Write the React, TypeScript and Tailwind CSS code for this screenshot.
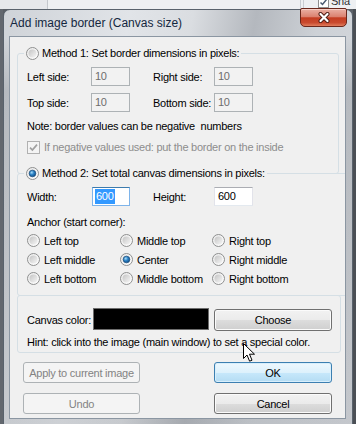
import type { ReactNode } from "react";

// Win7-style "Add image border (Canvas size)" dialog

function Defs() {
  return (
    <svg width="0" height="0" className="block">
      <defs>
        <linearGradient id="rbOuter" x1="0" y1="0" x2="1" y2="1">
          <stop offset="0" stopColor="#e9e9e9" />
          <stop offset="1" stopColor="#ffffff" />
        </linearGradient>
        <linearGradient id="rbInner" x1="0" y1="0" x2="1" y2="1">
          <stop offset="0" stopColor="#c4c4c4" />
          <stop offset="1" stopColor="#f6f6f6" />
        </linearGradient>
        <radialGradient id="rbDot" cx="0.38" cy="0.35" r="0.7">
          <stop offset="0" stopColor="#a9dcf8" />
          <stop offset="0.45" stopColor="#2f86c9" />
          <stop offset="1" stopColor="#0e4a83" />
        </radialGradient>
      </defs>
    </svg>
  );
}

function Radio({ checked = false }: { checked?: boolean }) {
  return (
    <svg width="13" height="13" viewBox="0 0 13 13" className="shrink-0">
      <circle cx="6.5" cy="6.5" r="6" fill="url(#rbOuter)" stroke="#8e8f8f" />
      <circle cx="6.5" cy="6.5" r="4" fill="url(#rbInner)" />
      {checked && (
        <circle cx="6.5" cy="6.5" r="3.3" fill="url(#rbDot)" stroke="#1a4f80" strokeWidth="0.7" />
      )}
    </svg>
  );
}

function CheckBoxDisabled() {
  return (
    <svg width="13" height="13" viewBox="0 0 13 13" className="shrink-0">
      <rect x="0.5" y="0.5" width="12" height="12" fill="#f4f4f4" stroke="#b1b1b1" />
      <path d="M3 6.6 L5.4 9 L10 3.6" fill="none" stroke="#a0a0a0" strokeWidth="1.7" />
    </svg>
  );
}

function TextBox({
  value,
  w,
  state = "normal",
}: {
  value: string;
  w: string;
  state?: "normal" | "disabled" | "focused";
}) {
  if (state === "disabled") {
    return (
      <div className={`${w} h-[19px] shrink-0 border border-[#adb2b5] bg-[#f2f2f2] pl-[3px] leading-[17px] text-[#6d6d6d]`}>
        {value}
      </div>
    );
  }
  if (state === "focused") {
    return (
      <div className={`${w} h-[19px] shrink-0 border border-[#7eb4ea] border-t-[#3d7bad] bg-white pl-[2px] pt-[1px]`}>
        <span className="inline-block h-[15px] bg-[#3399ff] px-px leading-[15px] text-white">{value}</span>
      </div>
    );
  }
  return (
    <div className={`${w} h-[19px] shrink-0 border border-[#e2e3ea] border-t-[#abadb3] border-b-[#e3e9ef] bg-white pl-[3px] leading-[17px]`}>
      {value}
    </div>
  );
}

function Button({
  children,
  w,
  variant = "normal",
  h = "h-[21px]",
}: {
  children: ReactNode;
  w: string;
  variant?: "normal" | "default" | "disabled";
  h?: string;
}) {
  const look =
    variant === "disabled"
      ? "border-[#adb2b5] bg-[#f4f4f4] text-[#838383]"
      : variant === "default"
        ? "border-[#3c7fb1] bg-[linear-gradient(180deg,#eef8fe_0%,#ddf1fc_50%,#c7e8fb_51%,#b4dcf3_100%)] shadow-[inset_0_0_0_1px_#d8effc]"
        : "border-[#707070] bg-[linear-gradient(180deg,#f2f2f2_0%,#ebebeb_50%,#dddddd_51%,#cfcfcf_100%)] shadow-[inset_0_0_0_1px_#fbfbfb]";
  return (
    <div className={`${w} ${h} shrink-0 flex items-center justify-center rounded-[3px] border ${look}`}>
      {children}
    </div>
  );
}

function Backdrop() {
  return (
    <div className="flex h-[9px] overflow-hidden bg-[#eef0f2]">
      <div className="w-[47px] bg-[#e6e8eb]" />
      <div className="w-px bg-[#c3c7cc]" />
      <div className="w-[252px]" />
      <div className="w-px bg-[#c9cdd2]" />
      <div className="w-[2px]" />
      <div className="w-px bg-[#c9cdd2]" />
      <div className="w-[14px]" />
      <svg width="11" height="11" viewBox="0 0 11 11" className="-mt-[3px] shrink-0">
        <rect x="0.5" y="0.5" width="10" height="10" fill="#ffffff" stroke="#8f8f8f" />
        <path d="M2.5 5.5 L4.5 7.5 L8.5 2.5" fill="none" stroke="#4a5a70" strokeWidth="1.5" />
      </svg>
      <span className="ml-[2px] -mt-[6px] text-[11px] leading-[14px] text-[#333]">Sha</span>
    </div>
  );
}

export default function App() {
  return (
    <div className="relative h-[424px] w-[356px] overflow-hidden bg-[#5a5f66] font-['Liberation_Sans',Arial,sans-serif] text-[11px] leading-[14px] tracking-[-0.25px] text-black">
      <Defs />
      <Backdrop />
      <div className="flex">
        <div className="w-[3px] shrink-0 bg-[#62676e]" />
        {/* window */}
        <div className="flex h-[420px] w-[350px] shrink-0 flex-col rounded-t-[7px] border border-[#59626c] bg-[linear-gradient(180deg,rgba(0,0,0,0)_0px,rgba(0,0,0,0)_28px,rgba(60,64,70,0.18)_80px,rgba(60,64,70,0.12)_100%),linear-gradient(100deg,#cfd3d8_0%,#e1e4e8_30%,#dadde1_45%,#b4b8be_60%,#cdd1d6_75%,#d7dadf_100%)]">
          {/* title bar */}
          <div className="flex h-[26px] shrink-0 items-start pl-[6px]">
            <span className="mt-[6px] text-[12px] leading-[14px] tracking-[0px] text-[#14273f]">
              Add image border (Canvas size)
            </span>
          </div>

          {/* client area */}
          <div className="ml-[5px] h-[383px] w-[337px] shrink-0 overflow-hidden border border-[#8b96a2] bg-[#f0f0f0]">
            <div className="pl-[7px] pt-[9px]">
              {/* Method 1 */}
              <fieldset className="w-[322px] rounded-[3px] border border-[#d5dfe5] pb-[19px] pl-[6px]">
                <legend className="px-[2px]">
                  <span className="flex h-[14px] items-center gap-[3px]">
                    <Radio />
                    <span>Method 1: Set border dimensions in pixels:</span>
                  </span>
                </legend>
                <div className="mt-[7px] flex h-[19px] items-center pl-[3px]">
                  <span className="w-[64px]">Left side:</span>
                  <TextBox value="10" w="w-[39px]" state="disabled" />
                  <span className="ml-[23px] w-[61px]">Right side:</span>
                  <TextBox value="10" w="w-[39px]" state="disabled" />
                </div>
                <div className="mt-[7px] flex h-[19px] items-center pl-[3px]">
                  <span className="w-[64px]">Top side:</span>
                  <TextBox value="10" w="w-[39px]" state="disabled" />
                  <span className="ml-[23px] w-[61px]">Bottom side:</span>
                  <TextBox value="10" w="w-[39px]" state="disabled" />
                </div>
                <div className="mt-[7px] h-[14px] pl-[3px] whitespace-pre">Note: border values can be negative  numbers</div>
                <div className="mt-[7px] flex h-[14px] items-center gap-[4px] pl-[3px] text-[#8d8d8d]">
                  <CheckBoxDisabled />
                  <span>If negative values used: put the border on the inside</span>
                </div>
              </fieldset>

              {/* Method 2 */}
              <fieldset className="-mt-[8px] w-[340px] rounded-[3px] border border-[#d5dfe5] pb-[7px] pl-[6px]">
                <legend className="bg-[#f0f0f0] px-[2px]">
                  <span className="flex h-[14px] items-center gap-[3px]">
                    <Radio checked />
                    <span>Method 2: Set total canvas dimensions in pixels:</span>
                  </span>
                </legend>
                <div className="mt-[7px] flex h-[19px] items-center pl-[3px]">
                  <span className="w-[65px]">Width:</span>
                  <TextBox value="600" w="w-[38px]" state="focused" />
                  <span className="ml-[23px] w-[61px]">Height:</span>
                  <TextBox value="600" w="w-[39px]" />
                </div>
                <div className="mt-[9px] h-[14px] pl-[3px]">Anchor (start corner):</div>
                <div className="mt-[2px] grid grid-cols-[93px_92px_100px] pl-[3px]">
                  {[
                    ["Left top", "Middle top", "Right top"],
                    ["Left middle", "Center", "Right middle"],
                    ["Left bottom", "Middle bottom", "Right bottom"],
                  ].flatMap((row) =>
                    row.map((label) => (
                      <div key={label} className="flex h-[19px] items-center gap-[4px]">
                        <Radio checked={label === "Center"} />
                        <span>{label}</span>
                      </div>
                    ))
                  )}
                </div>
              </fieldset>

              {/* Canvas color */}
              <div className="-mt-px w-[324px] rounded-[3px] border border-[#d5dfe5] pb-[3px] pl-[9px] pt-[12px]">
                <div className="flex h-[23px] items-center">
                  <span className="w-[66px]">Canvas color:</span>
                  <div className="h-[22px] w-[116px] self-start border border-[#6d6d6d] bg-black" />
                  <div className="ml-[5px] self-end">
                    <Button w="w-[118px]" h="h-[22px]">Choose</Button>
                  </div>
                </div>
                <div className="mt-[4px] h-[14px]">Hint: click into the image (main window) to set a special color.</div>
              </div>

              {/* bottom buttons */}
              <div className="mt-[9px] flex pl-[6px]">
                <div className="flex flex-col gap-[10px]">
                  <Button w="w-[117px]" variant="disabled">Apply to current image</Button>
                  <Button w="w-[117px]" variant="disabled">Undo</Button>
                </div>
                <div className="ml-[74px] flex flex-col gap-[10px]">
                  <Button w="w-[118px]" variant="default">OK</Button>
                  <Button w="w-[118px]">Cancel</Button>
                </div>
              </div>
            </div>
          </div>
        </div>
        <div className="w-[3px] shrink-0 bg-[#4b4f55]" />
      </div>

      {/* caption close button, sits over the frame edge */}
      <div className="absolute left-[300px] top-[8px] z-10 flex h-[19px] w-[47px] items-center justify-center rounded-b-[5px] rounded-t-[2px] border border-[#6b271b] bg-[#c8462c] bg-[linear-gradient(180deg,#eab0a4_0%,#db8270_45%,#c43d22_52%,#c94a2e_80%,#e07c5c_100%)] shadow-[inset_0_1px_0_#f6cfc6]">
        <svg width="12" height="11" viewBox="0 0 12 11">
          <path d="M2.5 2 L9.5 9 M9.5 2 L2.5 9" stroke="#4b1a12" strokeWidth="4" strokeLinecap="round" />
          <path d="M2.5 2 L9.5 9 M9.5 2 L2.5 9" stroke="#ffffff" strokeWidth="2.2" strokeLinecap="round" />
        </svg>
      </div>

      {/* mouse pointer */}
      <svg width="13" height="20" viewBox="0 0 13 20" className="absolute left-[243px] top-[343px]">
        <path
          d="M0.5 0.5 L0.5 15.5 L4 12 L6.6 18.2 L9 17.2 L6.5 11.2 L11.5 11.2 Z"
          fill="#ffffff"
          stroke="#000000"
          strokeWidth="1"
          strokeLinejoin="round"
        />
      </svg>
    </div>
  );
}
